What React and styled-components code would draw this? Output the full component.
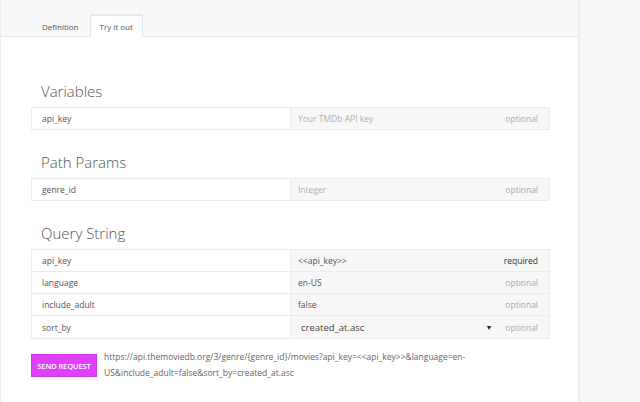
import React from "react";
import styled, { createGlobalStyle } from "styled-components";

const Global = createGlobalStyle`
  html, body {
    margin: 0;
    padding: 0;
    background: #f7f7f7;
    font-family: "Open Sans", "Liberation Sans", sans-serif;
  }
`;

const Page = styled.div`
  display: flex;
  height: 402px;
  overflow: hidden;
`;

const Main = styled.div`
  width: 577px;
  background: #fff;
  border-left: 1px solid #ececec;
  border-right: 2px solid #ececec;
`;

const Sidebar = styled.div`
  flex: 1;
  background: #f7f7f7;
`;

const TabBar = styled.div`
  height: 37px;
  background: #f7f8fa;
  border-bottom: 1px solid #e8e9ec;
  display: flex;
  align-items: flex-end;
  padding-left: 30px;
  box-sizing: border-box;
`;

const Tab = styled.div`
  height: 23px;
  padding: 0 ${p => (p.active ? 9 : 10)}px;
  font-size: 8px;
  color: #555;
  display: flex;
  align-items: center;
  box-sizing: border-box;
  margin-bottom: -1px;
  background: ${p => (p.active ? "#fff" : "transparent")};
  border: 1px solid ${p => (p.active ? "#e6e7ea" : "transparent")};
  border-bottom: none;
  border-top-width: 2px;
`;

const Content = styled.div`
  padding: 44px 28px 0 30px;
`;

const Section = styled.section`
  & + & {
    margin-top: 22px;
  }
`;

const Heading = styled.h2`
  margin: 0 0 6px 10px;
  font-size: 15px;
  line-height: 20px;
  font-weight: 300;
  color: #555;
`;

const Table = styled.div`
  border: 1px solid #ececec;
`;

const Row = styled.div`
  display: flex;
  height: ${p => (p.tall ? 22 : 21)}px;
  & + & {
    border-top: 1px solid #ececec;
  }
`;

const Name = styled.div`
  width: 259px;
  box-sizing: border-box;
  padding-left: 10px;
  display: flex;
  align-items: center;
  font-size: 8.5px;
  color: #555;
  background: #fff;
  border-right: 1px solid #ececec;
`;

const Value = styled.div`
  flex: 1;
  background: #f7f7f7;
  display: flex;
  align-items: center;
  padding: 0 11px 0 7px;
  font-size: 8.5px;
  color: ${p => (p.placeholder ? "#b0b0b0" : "#555")};
`;

const Grow = styled.span`
  flex: 1;
`;

const Select = styled.span`
  flex: 1;
  display: flex;
  align-items: center;
  font-size: 9.5px;
  color: #444;
  padding-left: 3px;
  padding-right: 13px;
`;

const Arrow = styled.span`
  margin-left: auto;
  font-size: 7px;
  color: #222;
`;

const Tag = styled.span`
  font-size: 8.5px;
  color: ${p => (p.required ? "#333" : "#aaa")};
`;

const Footer = styled.div`
  display: flex;
  align-items: flex-start;
  margin-top: 10px;
  gap: 7px;
`;

const SendButton = styled.button`
  width: 66px;
  height: 23px;
  margin-top: 5px;
  flex-shrink: 0;
  background: #e040fb;
  border: 1px solid #cf38e8;
  color: #fff;
  font-family: "Open Sans", "Liberation Sans", sans-serif;
  font-size: 7.5px;
  font-weight: 600;
  padding: 0;
  letter-spacing: -0.1px;
`;

const Url = styled.p`
  margin: 0;
  font-size: 8.5px;
  line-height: 16px;
  color: #666;
  max-width: 445px;
  word-break: break-word;
`;

const requestUrl =
  "https://api.themoviedb.org/3/genre/{genre_id}/movies?api_key=<<api_key>>&language=en-US&include_adult=false&sort_by=created_at.asc";

const vars = [{ name: "api_key", value: "Your TMDb API key", placeholder: true }];
const paths = [{ name: "genre_id", value: "Integer", placeholder: true }];
const query = [
  { name: "api_key", value: "<<api_key>>", required: true },
  { name: "language", value: "en-US" },
  { name: "include_adult", value: "false" },
  { name: "sort_by", value: "created_at.asc", select: true },
];

function ParamRow({ name, value, placeholder, required, select }) {
  return (
    <Row tall={select}>
      <Name>{name}</Name>
      <Value placeholder={placeholder}>
        {select ? (
          <Select>
            {value}
            <Arrow>▼</Arrow>
          </Select>
        ) : (
          <Grow>{value}</Grow>
        )}
        <Tag required={required}>{required ? "required" : "optional"}</Tag>
      </Value>
    </Row>
  );
}

function ParamSection({ title, rows }) {
  return (
    <Section>
      <Heading>{title}</Heading>
      <Table>
        {rows.map(r => (
          <ParamRow key={r.name} {...r} />
        ))}
      </Table>
    </Section>
  );
}

export default function App() {
  return (
    <Page>
      <Global />
      <Main>
        <TabBar>
          <Tab>Definition</Tab>
          <Tab active>Try it out</Tab>
        </TabBar>
        <Content>
          <ParamSection title="Variables" rows={vars} />
          <ParamSection title="Path Params" rows={paths} />
          <ParamSection title="Query String" rows={query} />
          <Footer>
            <SendButton>SEND REQUEST</SendButton>
            <Url>{requestUrl}</Url>
          </Footer>
        </Content>
      </Main>
      <Sidebar />
    </Page>
  );
}
